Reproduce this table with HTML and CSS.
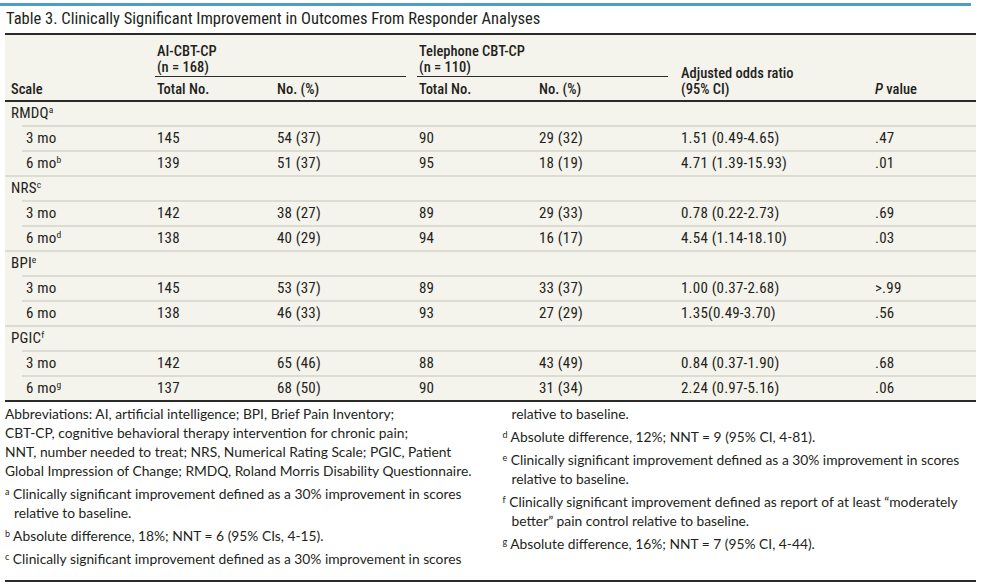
FILE: index.html
```html
<!DOCTYPE html>
<html lang="en">
<head>
<meta charset="utf-8">
<title>Table 3. Clinically Significant Improvement in Outcomes From Responder Analyses</title>
<link rel="stylesheet" href="styles.css">
</head>
<body>
<div class="page">
  <div class="accent"></div>
  <h1 class="title">Table 3. Clinically Significant Improvement in Outcomes From Responder Analyses</h1>
  <table class="data">
    <colgroup>
      <col class="c-scale"><col class="c-n"><col class="c-p"><col class="c-n"><col class="c-p"><col class="c-or"><col class="c-pv">
    </colgroup>
    <thead>
      <tr class="h1">
        <th rowspan="2" class="hb">Scale</th>
        <th colspan="2" class="grp"><div class="grp-in">AI-CBT-CP<br>(n = 168)</div></th>
        <th colspan="2" class="grp"><div class="grp-in">Telephone CBT-CP<br>(n = 110)</div></th>
        <th rowspan="2" class="hb">Adjusted odds ratio<br>(95% CI)</th>
        <th rowspan="2" class="hb"><i>P</i> value</th>
      </tr>
      <tr class="h2">
        <th class="hb">Total No.</th><th class="hb">No. (%)</th><th class="hb">Total No.</th><th class="hb">No. (%)</th>
      </tr>
    </thead>
    <tbody>
      <tr class="sec"><td colspan="7" class="lbl">RMDQ<sup>a</sup></td></tr>
      <tr><td class="sub">3 mo</td><td>145</td><td>54 (37)</td><td>90</td><td>29 (32)</td><td>1.51 (0.49-4.65)</td><td>.47</td></tr>
      <tr class="end"><td class="sub">6 mo<sup>b</sup></td><td>139</td><td>51 (37)</td><td>95</td><td>18 (19)</td><td>4.71 (1.39-15.93)</td><td>.01</td></tr>
      <tr class="sec"><td colspan="7" class="lbl">NRS<sup>c</sup></td></tr>
      <tr><td class="sub">3 mo</td><td>142</td><td>38 (27)</td><td>89</td><td>29 (33)</td><td>0.78 (0.22-2.73)</td><td>.69</td></tr>
      <tr class="end"><td class="sub">6 mo<sup>d</sup></td><td>138</td><td>40 (29)</td><td>94</td><td>16 (17)</td><td>4.54 (1.14-18.10)</td><td>.03</td></tr>
      <tr class="sec"><td colspan="7" class="lbl">BPI<sup>e</sup></td></tr>
      <tr><td class="sub">3 mo</td><td>145</td><td>53 (37)</td><td>89</td><td>33 (37)</td><td>1.00 (0.37-2.68)</td><td>&gt;.99</td></tr>
      <tr class="end"><td class="sub">6 mo</td><td>138</td><td>46 (33)</td><td>93</td><td>27 (29)</td><td>1.35(0.49-3.70)</td><td>.56</td></tr>
      <tr class="sec"><td colspan="7" class="lbl">PGIC<sup>f</sup></td></tr>
      <tr><td class="sub">3 mo</td><td>142</td><td>65 (46)</td><td>88</td><td>43 (49)</td><td>0.84 (0.37-1.90)</td><td>.68</td></tr>
      <tr class="last"><td class="sub">6 mo<sup>g</sup></td><td>137</td><td>68 (50)</td><td>90</td><td>31 (34)</td><td>2.24 (0.97-5.16)</td><td>.06</td></tr>
    </tbody>
  </table>
  <div class="notes">
    <p>Abbreviations: AI, artificial intelligence; BPI, Brief Pain Inventory;<br>CBT-CP, cognitive behavioral therapy intervention for chronic pain;<br>NNT, number needed to treat; NRS, Numerical Rating Scale; PGIC, Patient<br>Global Impression of Change; RMDQ, Roland Morris Disability Questionnaire.</p>
    <p class="fn"><sup>a</sup> Clinically significant improvement defined as a 30% improvement in scores relative to baseline.</p>
    <p class="fn"><sup>b</sup> Absolute difference, 18%; NNT = 6 (95% CIs, 4-15).</p>
    <p class="fn"><sup>c</sup> <span>Clinically significant improvement defined as a 30% improvement in scores</span> <span>relative to baseline.</span></p>
    <p class="fn"><sup>d</sup> Absolute difference, 12%; NNT = 9 (95% CI, 4-81).</p>
    <p class="fn"><sup>e</sup> Clinically significant improvement defined as a 30% improvement in scores relative to baseline.</p>
    <p class="fn"><sup>f</sup> Clinically significant improvement defined as report of at least “moderately better” pain control relative to baseline.</p>
    <p class="fn"><sup>g</sup> Absolute difference, 16%; NNT = 7 (95% CI, 4-44).</p>
  </div>
</div>
</body>
</html>
```
FILE: styles.css
```css
* { box-sizing: border-box; }
html, body { margin: 0; padding: 0; background: #fff; }
body {
  font-family: "Roboto Condensed", "Roboto", "Liberation Sans", sans-serif;
  color: #231f20;
}
.page { width: 981px; padding: 0 5px; }

.accent {
  height: 3px;
  margin: 3px 5px 0 -5px;
  background: #4b9fc3;
}
.title {
  margin: 0;
  padding: 3px 0 4px 1px;
  font-size: 16.5px;
  font-weight: 400;
  line-height: 20px;
  border-bottom: 2px solid #2b2b2b;
}

.data {
  width: 100%;
  table-layout: fixed;
  border-collapse: separate;
  border-spacing: 0;
  background: #f4f3ec;
  font-size: 15px;
}
.c-scale { width: 146px; }
.c-n { width: 120px; }
.c-p { width: 142px; }
.c-or { width: 194px; }
.c-pv { width: 107px; }

.data th {
  font-size: 14.5px;
  font-weight: 500;
  text-align: left;
  vertical-align: bottom;
  line-height: 16px;
  padding: 0 0 2px 6px;
  white-space: nowrap;
}
.data th.hb { border-bottom: 2px solid #2b2b2b; }
.data .h2 th { height: 25px; }
.data th.grp {
  vertical-align: top;
  padding: 0 7px 0 4px;
}
.grp-in {
  padding: 9px 0 0 2px;
  line-height: 16px;
  border-bottom: 1px solid #2b2b2b;
}

.data td {
  height: 25px;
  line-height: 23px;
  padding: 0 0 0 6px;
  letter-spacing: 0.2px;
  white-space: nowrap;
  border-bottom: 2px solid #dddcd3;
}
.data td.sub { padding-left: 21px; }
.data tr.sec td,
.data tr td.sub {
  border-bottom-color: transparent;
  background: linear-gradient(#dddcd3, #dddcd3) right bottom / calc(100% - 17px) 2px no-repeat border-box;
}
.data tr.end td.sub {
  border-bottom-color: #dddcd3;
  background: none;
}
.data tr.last td {
  height: 23px;
  border-bottom: none;
  background: none;
}
.data sup {
  font-size: 9.5px;
  line-height: 0;
  vertical-align: 5px;
}

.notes {
  height: 182px;
  column-count: 2;
  column-gap: 24px;
  column-fill: auto;
  padding-top: 2px;
  border-top: 2px solid #2b2b2b;
  border-bottom: 2px solid #2b2b2b;
  font-family: Lato, "Roboto", "Liberation Sans", sans-serif;
  font-size: 13.8px;
  line-height: 19px;
  orphans: 1;
  widows: 1;
}
.notes p { margin: 0; }
.notes p.fn {
  margin-top: 4px;
  padding-left: 9px;
  text-indent: -9px;
}
.notes sup {
  font-size: 9px;
  line-height: 0;
  vertical-align: 4px;
}
```
